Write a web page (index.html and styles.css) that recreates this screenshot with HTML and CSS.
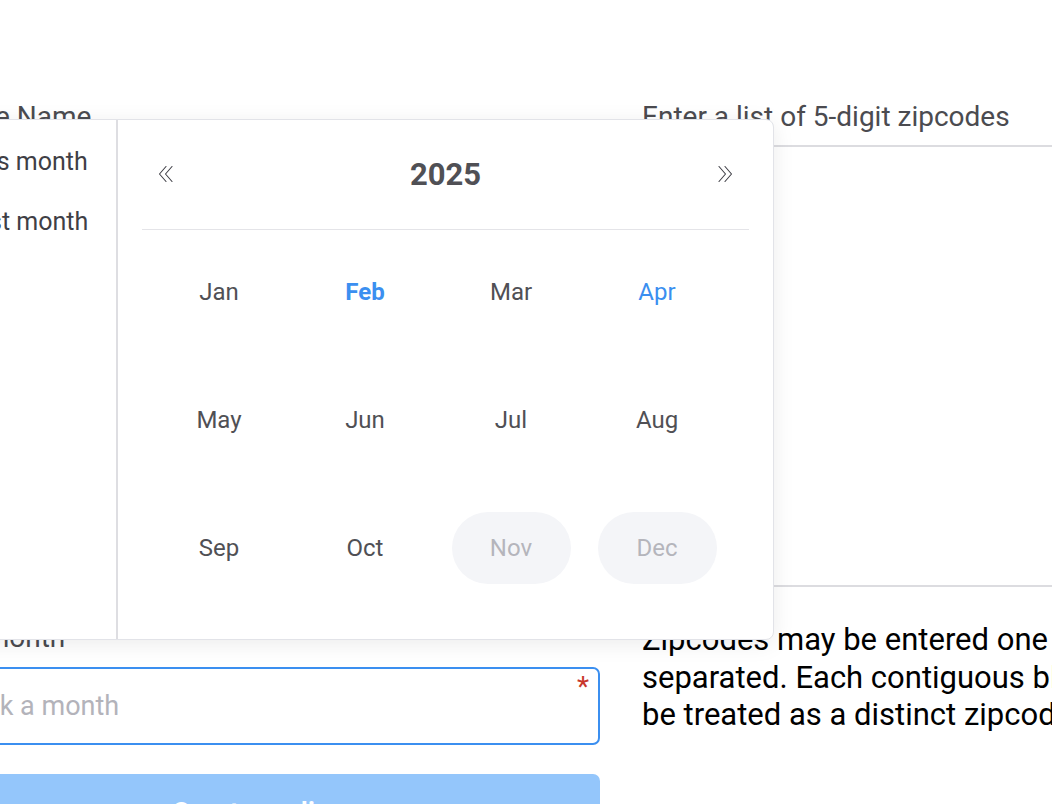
FILE: index.html
```html
<!DOCTYPE html>
<html lang="en">
<head>
<meta charset="utf-8">
<title>Zipcode list</title>
<link rel="stylesheet" href="styles.css">
</head>
<body>
<div class="page">
  <div class="col col-left">
    <div class="field">
      <label class="label">Zone Name</label>
      <input class="input" type="text">
    </div>
    <div class="field">
      <label class="label">Description</label>
      <textarea class="input area-small"></textarea>
    </div>
    <div class="field field-month">
      <label class="label">By month</label>
      <div class="input-wrap">
        <input class="input input-active" type="text" placeholder="Pick a month">
        <span class="req">*</span>
      </div>

      <div class="picker">
        <ul class="shortcuts">
          <li>This month</li>
          <li>Last month</li>
        </ul>
        <div class="panel">
          <div class="panel-head">
            <button class="nav" type="button" aria-label="Previous year">
              <svg width="18" height="18" viewBox="0 0 18 18" fill="none" stroke="#3f3f46" stroke-width="1.1" stroke-linecap="round" stroke-linejoin="round"><path d="M9 1.5 L2.5 9 L9 16.5 M15 1.5 L8.5 9 L15 16.5"/></svg>
            </button>
            <div class="year">2025</div>
            <button class="nav" type="button" aria-label="Next year">
              <svg width="18" height="18" viewBox="0 0 18 18" fill="none" stroke="#3f3f46" stroke-width="1.1" stroke-linecap="round" stroke-linejoin="round"><path d="M3 1.5 L9.5 9 L3 16.5 M9 1.5 L15.5 9 L9 16.5"/></svg>
            </button>
          </div>
          <div class="months">
            <div class="month">Jan</div>
            <div class="month selected">Feb</div>
            <div class="month">Mar</div>
            <div class="month current">Apr</div>
            <div class="month">May</div>
            <div class="month">Jun</div>
            <div class="month">Jul</div>
            <div class="month">Aug</div>
            <div class="month">Sep</div>
            <div class="month">Oct</div>
            <div class="month disabled">Nov</div>
            <div class="month disabled">Dec</div>
          </div>
        </div>
      </div>
    </div>
    <button class="submit" type="button">Create audience</button>
  </div>

  <div class="col col-right">
    <div class="field">
      <label class="label">Enter a list of 5-digit zipcodes</label>
      <textarea class="input area-big"></textarea>
    </div>
    <p class="help">Zipcodes may be entered one per line, or comma separated. Each contiguous block of 5 digits will be treated as a distinct zipcode.</p>
  </div>
</div>
</body>
</html>
```

FILE: styles.css
```css
html, body {
  margin: 0;
  padding: 0;
  overflow: hidden;
  background: #ffffff;
}

body {
  font-family: Roboto, "Noto Sans", Arial, sans-serif;
  width: 1052px;
  height: 804px;
}

.page {
  display: grid;
  grid-template-columns: 653px 700px;
  column-gap: 42px;
  margin-left: -53px;
  padding-top: 101px;
  width: 1400px;
}

.col {
  display: flex;
  flex-direction: column;
}

.col-left {
  gap: 29px;
}

.field {
  display: flex;
  flex-direction: column;
  gap: 12px;
}

.label {
  font-size: 28px;
  line-height: 32px;
  color: #4b4b50;
  white-space: nowrap;
}

.input {
  box-sizing: border-box;
  height: 78px;
  border: 2px solid #dcdce0;
  border-radius: 7px;
  font-family: inherit;
  font-size: 27px;
  padding: 0 13px;
  background: #fff;
  outline: none;
  resize: none;
}

.area-small {
  height: 297px;
}

.area-big {
  height: 442px;
}

.field-month {
  position: relative;
  gap: 13px;
}

.input-wrap {
  position: relative;
  display: flex;
}

.input-active {
  flex: 1;
  border-color: #3b8ff0;
  color: #222;
}

.input-active::placeholder {
  color: #b3b3ba;
}

.req {
  position: absolute;
  right: 11px;
  top: 6px;
  color: #c8372d;
  font-size: 28px;
  line-height: 28px;
}

.submit {
  height: 78px;
  border: none;
  border-radius: 7px;
  background: #94c6fb;
  color: #ffffff;
  font-family: inherit;
  font-size: 28px;
  font-weight: 600;
  padding: 0;
  text-align: center;
  line-height: 78px;
}

.help {
  margin: 34px 0 0;
  font-size: 31px;
  line-height: 37.5px;
  color: #000;
  width: 686px;
}

/* Month picker popup */
.picker {
  position: absolute;
  left: 0;
  bottom: 105px;
  z-index: 10;
  box-sizing: border-box;
  width: 827px;
  height: 521px;
  display: flex;
  background: #ffffff;
  border: 1px solid #e2e3e8;
  border-radius: 8px;
  box-shadow: 0 4px 22px rgba(0, 0, 0, 0.08);
}

.shortcuts {
  list-style: none;
  margin: 0;
  padding: 12px 0 0 14px;
  box-sizing: border-box;
  border-right: 2px solid #dedee2;
  flex: none;
  width: 170px;
}

.shortcuts li {
  height: 60px;
  line-height: 60px;
  font-size: 25px;
  color: #3f3f46;
  white-space: nowrap;
}

.panel {
  flex: 1;
  padding: 23px 24px 24px;
}

.panel-head {
  display: flex;
  align-items: center;
  justify-content: space-between;
  height: 62px;
  padding-bottom: 24px;
  border-bottom: 1px solid #e4e4e8;
}

.nav {
  width: 48px;
  height: 48px;
  display: flex;
  align-items: center;
  justify-content: center;
  background: none;
  border: none;
  padding: 0;
}

.year {
  font-size: 31px;
  font-weight: 700;
  color: #505055;
}

.months {
  display: grid;
  grid-template-columns: repeat(4, 146px);
  row-gap: 56px;
  margin-left: 4px;
  padding-top: 26px;
}

.month {
  justify-self: center;
  width: 119px;
  height: 72px;
  border-radius: 36px;
  display: flex;
  align-items: center;
  justify-content: center;
  font-size: 24px;
  color: #505055;
}

.month.selected {
  color: #3b8ff0;
  font-weight: 700;
}

.month.current {
  color: #3b8ff0;
}

.month.disabled {
  background: #f4f5f8;
  color: #b5b5bc;
}
```
